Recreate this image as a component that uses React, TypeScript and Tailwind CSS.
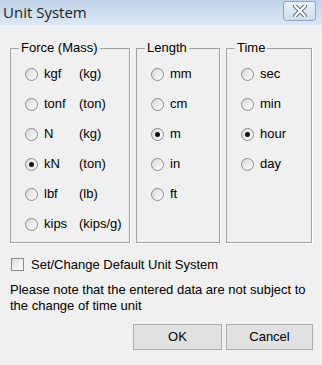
import type { ReactNode } from 'react';

const font = { fontFamily: '"Liberation Sans", Arial, sans-serif' };

function Radio({ checked }: { checked?: boolean }) {
  return (
    <span className="w-[13px] h-[13px] rounded-full border border-[#8a8a8a] bg-gradient-to-br from-[#d8d8d8] to-white flex items-center justify-center shrink-0">
      {checked && <span className="w-[5px] h-[5px] rounded-full bg-[#111]" />}
    </span>
  );
}

function Group({ title, children, className }: { title: string; children: ReactNode; className: string }) {
  return (
    <fieldset className={`border border-[#a0a0a0] shadow-[1px_1px_0_#fff] pl-[8px] h-[203px] ${className}`}>
      <legend className="px-[2px] text-[13px] leading-[16px] text-black">{title}</legend>
      <div className="flex flex-col pt-[3px]">{children}</div>
    </fieldset>
  );
}

function Row({ label, extra, checked }: { label: string; extra?: string; checked?: boolean }) {
  return (
    <div className="h-[30px] flex items-center pl-[6px] text-[13px] text-black whitespace-nowrap">
      <Radio checked={checked} />
      <span className="ml-[6px] w-[35px]">{label}</span>
      {extra && <span>{extra}</span>}
    </div>
  );
}

export default function App() {
  return (
    <div className="w-[322px] h-[365px] bg-[#f0f0f0] flex flex-col" style={font}>
      {/* Title bar */}
      <div className="h-[25px] bg-gradient-to-b from-[#c0d3e9] to-[#dbe7f4] flex items-center justify-between pl-[3px] pr-[6px]">
        <span className="text-[15px] text-[#1e1e1e] leading-none" style={{ fontFamily: '"Open Sans", "Liberation Sans", sans-serif' }}>
          Unit System
        </span>
        <div className="w-[33px] h-[20px] -mt-[3px] rounded-[3px] border border-[#8fa4be] bg-gradient-to-b from-[#e9f0f8] to-[#cfdcec] flex items-center justify-center">
          <svg width="14" height="12" viewBox="0 0 14 12">
            <path d="M2 1 L12 11 M12 1 L2 11" stroke="#5b6f87" strokeWidth="4.2" strokeLinecap="round" />
            <path d="M2 1 L12 11 M12 1 L2 11" stroke="#ffffff" strokeWidth="2.2" strokeLinecap="round" />
          </svg>
        </div>
      </div>

      <div className="flex gap-[6px] pl-[10px] pt-[15px]">
        <Group title="Force (Mass)" className="w-[120px]">
          <Row label="kgf" extra="(kg)" />
          <Row label="tonf" extra="(ton)" />
          <Row label="N" extra="(kg)" />
          <Row label="kN" extra="(ton)" checked />
          <Row label="lbf" extra="(lb)" />
          <Row label="kips" extra="(kips/g)" />
        </Group>
        <Group title="Length" className="w-[84px]">
          <Row label="mm" />
          <Row label="cm" />
          <Row label="m" checked />
          <Row label="in" />
          <Row label="ft" />
        </Group>
        <Group title="Time" className="w-[86px]">
          <Row label="sec" />
          <Row label="min" />
          <Row label="hour" checked />
          <Row label="day" />
        </Group>
      </div>

      <label className="flex items-center mt-[12px] pl-[11px] text-[13px] text-black">
        <span className="w-[13px] h-[13px] border border-[#8a8a8a] bg-gradient-to-br from-[#e0e0e0] to-white" />
        <span className="ml-[7px]">Set/Change Default Unit System</span>
      </label>

      <p className="mt-[7px] pl-[10px] pr-2 text-[13px] leading-[16px] text-black">
        Please note that the entered data are not subject to the change of time unit
      </p>

      <div className="flex justify-end gap-[4px] pr-[9px] mt-[10px]">
        <button className="w-[89px] h-[26px] border border-[#adadad] bg-[#e1e1e1] text-[13px] text-black">OK</button>
        <button className="w-[87px] h-[26px] border border-[#adadad] bg-[#e1e1e1] text-[13px] text-black">Cancel</button>
      </div>
    </div>
  );
}
